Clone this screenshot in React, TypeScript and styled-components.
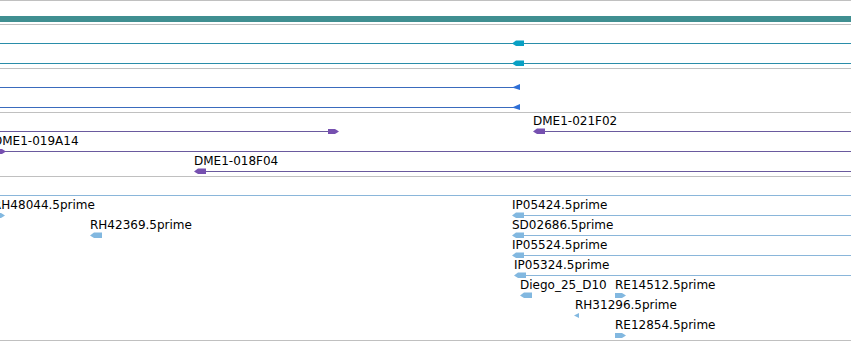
import React from "react";
import styled, { createGlobalStyle } from "styled-components";

const Global = createGlobalStyle`
  html, body { margin: 0; padding: 0; background: #fff; }
  body { font-family: "DejaVu Sans", sans-serif; overflow: hidden; }
`;

const View = styled.div`
  display: flex;
  flex-direction: column;
  width: 851px;
  height: 341px;
  overflow: hidden;
  background: #fff;
`;

const Track = styled.section<{ $last?: boolean }>`
  display: flex;
  flex-direction: column;
  border-top: 1px solid #c0c0c0;
  border-bottom: ${(p) => (p.$last ? "1px solid #c0c0c0" : "none")};
  padding-bottom: 3px;
`;

const RulerTrack = styled.div`
  display: flex;
  flex-direction: column;
  border-top: 1px solid #c0c0c0;
  padding: 15px 0 2px;
`;

const RulerBar = styled.div`
  height: 6px;
  background: #408f91;
`;

const Row = styled.div`
  position: relative;
  height: 20px;
  flex: none;
`;

const Line = styled.div<{ $color: string }>`
  position: absolute;
  top: 18px;
  height: 1px;
  background: ${(p) => p.$color};
`;

const Label = styled.div`
  position: absolute;
  top: 2px;
  font-size: 12px;
  line-height: 12px;
  color: #000;
  white-space: nowrap;
`;

const GlyphSvg = styled.svg`
  position: absolute;
  top: 15px;
  display: block;
`;

type Kind = "tailLeft" | "flagLeft" | "right" | "tiny";

type Feat = {
  x1: number;
  x2: number;
  glyph?: { x: number; kind: Kind };
  label?: { x: number; text: string };
};

type TrackDef = { line: string; fill: string; rows: Feat[][] };

function Glyph({ x, kind, fill }: { x: number; kind: Kind; fill: string }) {
  if (kind === "tailLeft") {
    return (
      <GlyphSvg width={13} height={7} style={{ left: x }}>
        <polygon points="0,3.5 4,0.5 12,0.5 12,6 4,6" fill={fill} />
      </GlyphSvg>
    );
  }
  if (kind === "flagLeft") {
    return (
      <GlyphSvg width={9} height={7} style={{ left: x }}>
        <polygon points="0,3.5 8,0 8,6" fill={fill} />
      </GlyphSvg>
    );
  }
  if (kind === "tiny") {
    return (
      <GlyphSvg width={6} height={7} style={{ left: x }}>
        <polygon points="0,3.5 5,1 5,6" fill={fill} />
      </GlyphSvg>
    );
  }
  return (
    <GlyphSvg width={13} height={7} style={{ left: x }}>
      <polygon points="0,1 7,1 11,3.5 7,6 0,6" fill={fill} />
    </GlyphSvg>
  );
}

const W = 851;

const tracks: TrackDef[] = [
  {
    line: "#2a8da9",
    fill: "#0aa0c4",
    rows: [
      [{ x1: 0, x2: W, glyph: { x: 512, kind: "tailLeft" } }],
      [{ x1: 0, x2: W, glyph: { x: 512, kind: "tailLeft" } }],
    ],
  },
  {
    line: "#3a6bbd",
    fill: "#2f6fd6",
    rows: [
      [{ x1: 0, x2: 514, glyph: { x: 512, kind: "flagLeft" } }],
      [{ x1: 0, x2: 514, glyph: { x: 512, kind: "flagLeft" } }],
    ],
  },
  {
    line: "#6a5a9e",
    fill: "#7650b0",
    rows: [
      [
        { x1: 0, x2: 330, glyph: { x: 328, kind: "right" } },
        {
          x1: 535,
          x2: W,
          glyph: { x: 533, kind: "tailLeft" },
          label: { x: 533, text: "DME1-021F02" },
        },
      ],
      [
        {
          x1: 0,
          x2: W,
          glyph: { x: -5, kind: "right" },
          label: { x: -7, text: "DME1-019A14" },
        },
      ],
      [
        {
          x1: 196,
          x2: W,
          glyph: { x: 194, kind: "tailLeft" },
          label: { x: 194, text: "DME1-018F04" },
        },
      ],
    ],
  },
  {
    line: "#8ab6da",
    fill: "#82b8e0",
    rows: [
      [{ x1: 0, x2: W }],
      [
        {
          x1: 0,
          x2: 0,
          glyph: { x: -6, kind: "right" },
          label: { x: -7, text: "RH48044.5prime" },
        },
        {
          x1: 514,
          x2: W,
          glyph: { x: 512, kind: "tailLeft" },
          label: { x: 512, text: "IP05424.5prime" },
        },
      ],
      [
        {
          x1: 0,
          x2: 0,
          glyph: { x: 90, kind: "tailLeft" },
          label: { x: 90, text: "RH42369.5prime" },
        },
        {
          x1: 514,
          x2: W,
          glyph: { x: 512, kind: "tailLeft" },
          label: { x: 512, text: "SD02686.5prime" },
        },
      ],
      [
        {
          x1: 514,
          x2: W,
          glyph: { x: 512, kind: "tailLeft" },
          label: { x: 512, text: "IP05524.5prime" },
        },
      ],
      [
        {
          x1: 516,
          x2: W,
          glyph: { x: 514, kind: "tailLeft" },
          label: { x: 514, text: "IP05324.5prime" },
        },
      ],
      [
        {
          x1: 0,
          x2: 0,
          glyph: { x: 520, kind: "tailLeft" },
          label: { x: 520, text: "Diego_25_D10" },
        },
        {
          x1: 0,
          x2: 0,
          glyph: { x: 615, kind: "right" },
          label: { x: 615, text: "RE14512.5prime" },
        },
      ],
      [
        {
          x1: 0,
          x2: 0,
          glyph: { x: 574, kind: "tiny" },
          label: { x: 575, text: "RH31296.5prime" },
        },
      ],
      [
        {
          x1: 0,
          x2: 0,
          glyph: { x: 615, kind: "right" },
          label: { x: 615, text: "RE12854.5prime" },
        },
      ],
    ],
  },
];

export default function App() {
  return (
    <>
      <Global />
      <View>
        <RulerTrack>
          <RulerBar />
        </RulerTrack>
        {tracks.map((t, ti) => (
          <Track key={ti} $last={ti === tracks.length - 1}>
            {t.rows.map((row, ri) => (
              <Row key={ri}>
                {row.map((f, fi) => (
                  <React.Fragment key={fi}>
                    {f.x2 > f.x1 && (
                      <Line
                        $color={t.line}
                        style={{ left: f.x1, width: f.x2 - f.x1 }}
                      />
                    )}
                    {f.label && (
                      <Label style={{ left: f.label.x }}>{f.label.text}</Label>
                    )}
                    {f.glyph && (
                      <Glyph x={f.glyph.x} kind={f.glyph.kind} fill={t.fill} />
                    )}
                  </React.Fragment>
                ))}
              </Row>
            ))}
          </Track>
        ))}
      </View>
    </>
  );
}
